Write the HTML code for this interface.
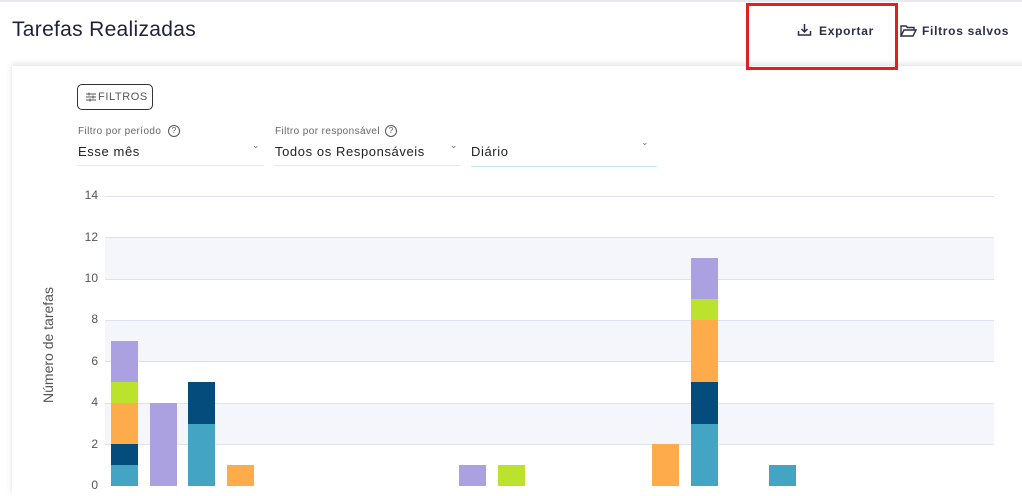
<!DOCTYPE html>
<html><head><meta charset="utf-8"><style>
*{margin:0;padding:0;box-sizing:border-box}
body{width:1022px;height:484px;overflow:hidden;background:#fff;font-family:"Liberation Sans",sans-serif;position:relative}
.a{position:absolute}
.topline{left:0;top:0;width:1022px;height:2px;background:#e6e8ee}
h1{position:absolute;left:12px;top:18px;font-size:21px;font-weight:400;color:#1e2240;letter-spacing:.3px}
.btn{font-size:12px;color:#2a2e4a;letter-spacing:.7px;font-weight:bold}
.card{left:12px;top:66px;width:1020px;height:430px;background:#fff;box-shadow:0 -2px 6px rgba(0,0,0,.12)}
.lbl{font-size:10px;color:#666;letter-spacing:.4px}
.val{font-size:13px;color:#222;letter-spacing:.6px}
.ul{height:1px;background:#e8e8e8}
.yt{font-size:12px;color:#555;width:24px;text-align:right}
.gl{left:105px;width:889px;height:1px;background:#dde2ee}
.band{left:105px;width:889px;background:#f5f6fb}
.b{position:absolute;width:27px}
.t{background:#44a4c4}.n{background:#044c7c}.o{background:#feac4b}.g{background:#bbe32d}.p{background:#aba0e0}
</style></head><body>
<div class="a topline"></div>
<h1>Tarefas Realizadas</h1>
<div class="a card"></div>
<div class="a" style="left:746px;top:3px;width:152px;height:67px;border:3px solid #e0201f;z-index:5"></div>
<svg class="a" style="left:797px;top:23px" width="15" height="14" viewBox="0 0 15 14"><path d="M7.5 1v8M4.5 6l3 3 3-3M1.5 8v4h12V8" fill="none" stroke="#2a2e4a" stroke-width="1.5"/></svg>
<div class="a btn" style="left:819px;top:24px">Exportar</div>
<svg class="a" style="left:900px;top:24px" width="17" height="14" viewBox="0 0 17 14"><path d="M1 12V2h5l1.5 1.5H14V6M1 12l3-6h12l-3 6z" fill="none" stroke="#2a2e4a" stroke-width="1.4"/></svg>
<div class="a btn" style="left:922px;top:24px">Filtros salvos</div>

<div class="a" style="left:77px;top:84px;width:76px;height:26px;border:1px solid #333;border-radius:5px;font-size:11px;color:#555;letter-spacing:.6px;padding:6px 0 0 20px">FILTROS</div>
<svg class="a" style="left:85px;top:91px" width="12" height="12" viewBox="0 0 12 12"><path d="M1 3h10M1 6h10M1 9h10M4 1.5v3M8 4.5v3M5 7.5v3" stroke="#555" stroke-width="1"/></svg>

<div class="a lbl" style="left:78px;top:126px">Filtro por período</div>
<div class="a" style="left:168px;top:125px;width:12px;height:12px;border:1px solid #555;border-radius:50%;font-size:8px;text-align:center;line-height:10px;color:#555">?</div>
<div class="a val" style="left:78px;top:144px">Esse mês</div>
<div class="a" style="left:252px;top:140px;font-size:9px;color:#667">⌄</div>
<div class="a ul" style="left:77px;top:165px;width:187px"></div>

<div class="a lbl" style="left:275px;top:126px">Filtro por responsável</div>
<div class="a" style="left:385px;top:125px;width:12px;height:12px;border:1px solid #555;border-radius:50%;font-size:8px;text-align:center;line-height:10px;color:#555">?</div>
<div class="a val" style="left:275px;top:144px">Todos os Responsáveis</div>
<div class="a" style="left:450px;top:140px;font-size:9px;color:#667">⌄</div>
<div class="a ul" style="left:274px;top:165px;width:186px"></div>

<div class="a val" style="left:471px;top:144px">Diário</div>
<div class="a" style="left:641px;top:137px;font-size:9px;color:#667">⌄</div>
<div class="a" style="left:471px;top:166px;width:186px;height:1px;background:#bfe6ee"></div>

<div class="a band" style="top:237px;height:42px"></div>
<div class="a band" style="top:320px;height:41px"></div>
<div class="a band" style="top:403px;height:41px"></div>
<div class="a gl" style="top:196px"></div>
<div class="a gl" style="top:237px"></div>
<div class="a gl" style="top:279px"></div>
<div class="a gl" style="top:320px"></div>
<div class="a gl" style="top:361px"></div>
<div class="a gl" style="top:403px"></div>
<div class="a gl" style="top:444px"></div>
<div class="a yt" style="left:74px;top:188px">14</div>
<div class="a yt" style="left:74px;top:230px">12</div>
<div class="a yt" style="left:74px;top:271px">10</div>
<div class="a yt" style="left:74px;top:312px">8</div>
<div class="a yt" style="left:74px;top:354px">6</div>
<div class="a yt" style="left:74px;top:395px">4</div>
<div class="a yt" style="left:74px;top:437px">2</div>
<div class="a yt" style="left:74px;top:478px">0</div>
<div class="a" style="left:-22px;top:337px;width:140px;transform:rotate(-90deg);font-size:14px;color:#555;text-align:center;white-space:nowrap">Número de tarefas</div>

<div class="b t" style="left:111px;top:465px;height:21px"></div>
<div class="b n" style="left:111px;top:444px;height:21px"></div>
<div class="b o" style="left:111px;top:403px;height:41px"></div>
<div class="b g" style="left:111px;top:382px;height:21px"></div>
<div class="b p" style="left:111px;top:341px;height:41px"></div>
<div class="b p" style="left:150px;top:403px;height:83px"></div>
<div class="b t" style="left:188px;top:424px;height:62px"></div>
<div class="b n" style="left:188px;top:382px;height:42px"></div>
<div class="b o" style="left:227px;top:465px;height:21px"></div>
<div class="b p" style="left:459px;top:465px;height:21px"></div>
<div class="b g" style="left:498px;top:465px;height:21px"></div>
<div class="b o" style="left:652px;top:444px;height:42px"></div>
<div class="b t" style="left:691px;top:424px;height:62px"></div>
<div class="b n" style="left:691px;top:382px;height:42px"></div>
<div class="b o" style="left:691px;top:320px;height:62px"></div>
<div class="b g" style="left:691px;top:299px;height:21px"></div>
<div class="b p" style="left:691px;top:258px;height:41px"></div>
<div class="b t" style="left:769px;top:465px;height:21px"></div>
</body></html>
